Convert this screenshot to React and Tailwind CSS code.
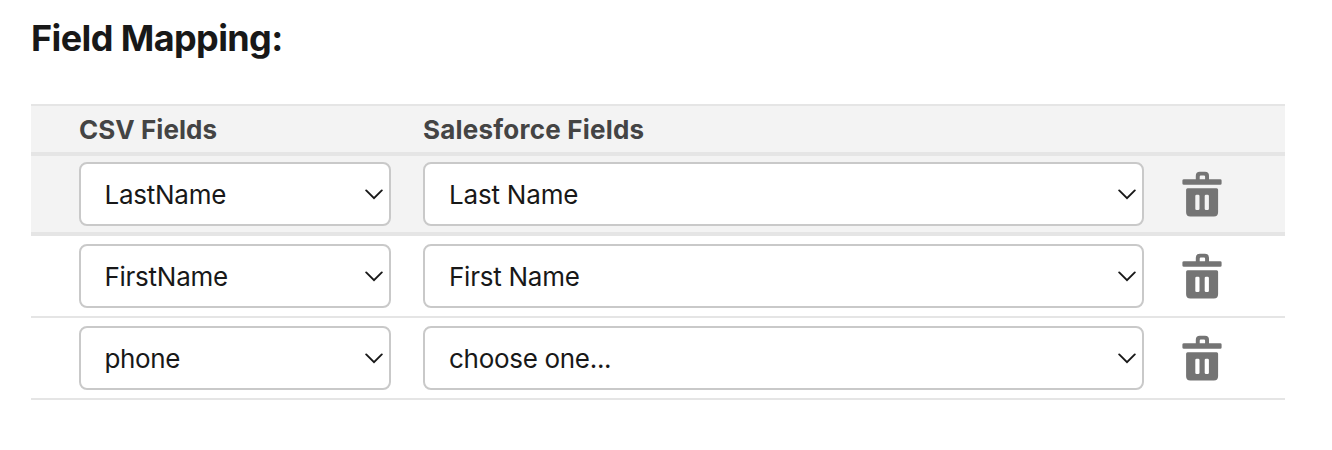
const rows = [
  { csv: "LastName", field: "Last Name", csvSpacing: "tracking-[-0.25px]", fieldSpacing: "tracking-[-0.2px]" },
  { csv: "FirstName", field: "First Name", csvSpacing: "tracking-[-0.27px]", fieldSpacing: "tracking-[-0.25px]" },
  { csv: "phone", field: "choose one...", csvSpacing: "tracking-[-0.35px]", fieldSpacing: "tracking-[-0.3px]" },
];

function Chevron() {
  return (
    <svg width="18" height="12" viewBox="0 0 18 12" fill="none" className="shrink-0">
      <path d="M1.2 2.4 L9 10.1 L16.8 2.4" stroke="#181818" strokeWidth="1.9" strokeLinecap="round" strokeLinejoin="miter" />
    </svg>
  );
}

function Trash() {
  return (
    <svg width="64" height="64" viewBox="0 0 64 64" fill="#747474">
      <path
        fillRule="evenodd"
        d="M14 19.2H25.8V15.8Q25.8 11.8 29.8 11.8H35Q39 11.8 39 15.8V19.2H50.2Q51.6 19.2 51.6 20.5V23.4Q51.6 24.7 50.2 24.7H14Q12.4 24.7 12.4 23.4V20.5Q12.4 19.2 14 19.2ZM29.7 19.2H35.1V16.7Q35.1 15.6 34 15.6H30.8Q29.7 15.6 29.7 16.7Z"
      />
      <path
        fillRule="evenodd"
        d="M17.6 28.2H46.6Q48.1 28.2 48.1 29.7V52.2Q48.1 56.4 43.9 56.4H20.3Q16.1 56.4 16.1 52.2V29.7Q16.1 28.2 17.6 28.2ZM26.6 34.8Q25.3 34.8 25.3 36.1V48.8Q25.3 50.1 26.6 50.1H28.2Q29.5 50.1 29.5 48.8V36.1Q29.5 34.8 28.2 34.8ZM36 34.8Q34.7 34.8 34.7 36.1V48.8Q34.7 50.1 36 50.1H37.6Q38.9 50.1 38.9 48.8V36.1Q38.9 34.8 37.6 34.8Z"
      />
    </svg>
  );
}

function Picker({ label, width, spacing }) {
  return (
    <button
      type="button"
      className={`flex h-16 items-center justify-between rounded-lg border-2 border-[#c9c9c9] bg-white pr-1.5 text-[26px] leading-10 text-[#181818] ${width} ${spacing}`}
    >
      <span className="pt-0.5">{label}</span>
      <Chevron />
    </button>
  );
}

export default function App() {
  return (
    <main className="h-[450px] w-full bg-white pt-4 pr-[47px] pl-[31px] font-['Inter',sans-serif]">
      <h1 className="h-[88px] text-[36px] leading-[45px] font-bold tracking-[-0.6px] text-[#181818]">
        <span>Field Mapping:</span>
      </h1>
      <section>
        <header className="flex h-[52px] items-center border-t-2 border-b-4 border-[#e5e5e5] bg-[#f3f3f3] pt-0.5 pl-12 text-[26px] leading-10 font-bold text-[#444444]">
          <div className="w-[344px] tracking-[0.05px]">CSV Fields</div>
          <div className="tracking-[0.22px]">Salesforce Fields</div>
        </header>
        {rows.map((row, i) => (
          <div
            key={row.csv}
            className={`flex items-center border-[#e5e5e5] pl-12 ${i === 0 ? "h-20 border-b-4 bg-[#f3f3f3]" : "h-[82px] border-b-2"}`}
          >
            <Picker label={row.csv} width="w-[312px] pl-[23.5px]" spacing={row.csvSpacing} />
            <div className="w-8" />
            <Picker label={row.field} width="w-[721px] pl-6" spacing={row.fieldSpacing} />
            <button type="button" aria-label="Delete mapping" className="-mt-1 ml-[26px]">
              <Trash />
            </button>
          </div>
        ))}
      </section>
    </main>
  );
}
